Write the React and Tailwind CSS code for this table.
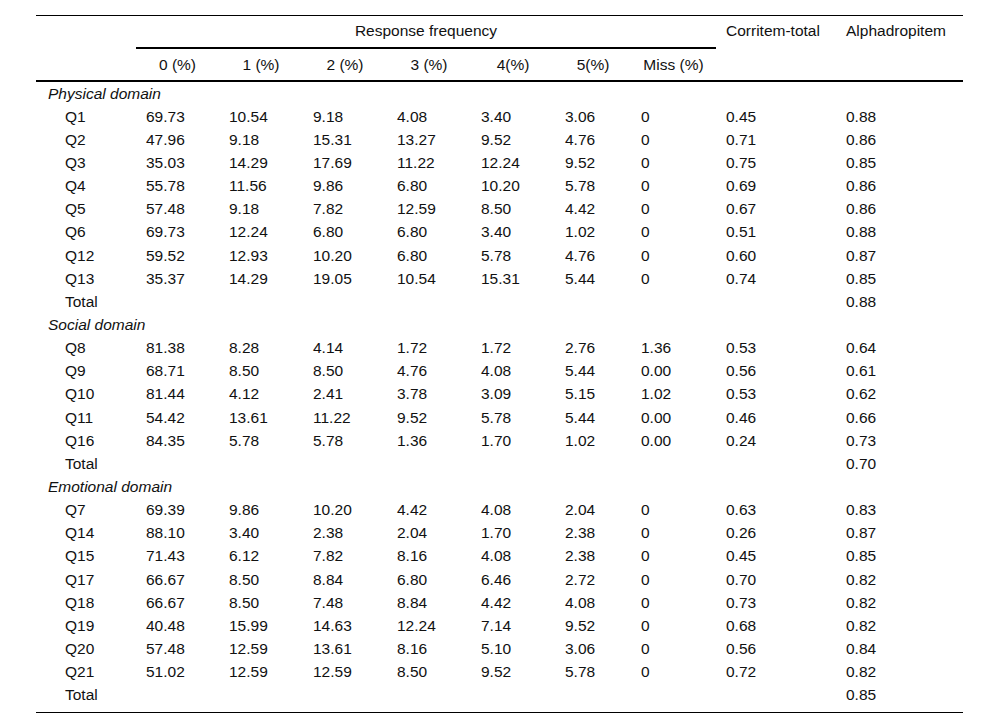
const cols = 'grid grid-cols-[100px_83px_84px_84px_84px_84px_76px_85px_120px_127px]'

const domains = [
  {
    name: 'Physical domain',
    rows: [
      ['Q1', '69.73', '10.54', '9.18', '4.08', '3.40', '3.06', '0', '0.45', '0.88'],
      ['Q2', '47.96', '9.18', '15.31', '13.27', '9.52', '4.76', '0', '0.71', '0.86'],
      ['Q3', '35.03', '14.29', '17.69', '11.22', '12.24', '9.52', '0', '0.75', '0.85'],
      ['Q4', '55.78', '11.56', '9.86', '6.80', '10.20', '5.78', '0', '0.69', '0.86'],
      ['Q5', '57.48', '9.18', '7.82', '12.59', '8.50', '4.42', '0', '0.67', '0.86'],
      ['Q6', '69.73', '12.24', '6.80', '6.80', '3.40', '1.02', '0', '0.51', '0.88'],
      ['Q12', '59.52', '12.93', '10.20', '6.80', '5.78', '4.76', '0', '0.60', '0.87'],
      ['Q13', '35.37', '14.29', '19.05', '10.54', '15.31', '5.44', '0', '0.74', '0.85'],
    ],
    total: '0.88',
  },
  {
    name: 'Social domain',
    rows: [
      ['Q8', '81.38', '8.28', '4.14', '1.72', '1.72', '2.76', '1.36', '0.53', '0.64'],
      ['Q9', '68.71', '8.50', '8.50', '4.76', '4.08', '5.44', '0.00', '0.56', '0.61'],
      ['Q10', '81.44', '4.12', '2.41', '3.78', '3.09', '5.15', '1.02', '0.53', '0.62'],
      ['Q11', '54.42', '13.61', '11.22', '9.52', '5.78', '5.44', '0.00', '0.46', '0.66'],
      ['Q16', '84.35', '5.78', '5.78', '1.36', '1.70', '1.02', '0.00', '0.24', '0.73'],
    ],
    total: '0.70',
  },
  {
    name: 'Emotional domain',
    rows: [
      ['Q7', '69.39', '9.86', '10.20', '4.42', '4.08', '2.04', '0', '0.63', '0.83'],
      ['Q14', '88.10', '3.40', '2.38', '2.04', '1.70', '2.38', '0', '0.26', '0.87'],
      ['Q15', '71.43', '6.12', '7.82', '8.16', '4.08', '2.38', '0', '0.45', '0.85'],
      ['Q17', '66.67', '8.50', '8.84', '6.80', '6.46', '2.72', '0', '0.70', '0.82'],
      ['Q18', '66.67', '8.50', '7.48', '8.84', '4.42', '4.08', '0', '0.73', '0.82'],
      ['Q19', '40.48', '15.99', '14.63', '12.24', '7.14', '9.52', '0', '0.68', '0.82'],
      ['Q20', '57.48', '12.59', '13.61', '8.16', '5.10', '3.06', '0', '0.56', '0.84'],
      ['Q21', '51.02', '12.59', '12.59', '8.50', '9.52', '5.78', '0', '0.72', '0.82'],
    ],
    total: '0.85',
  },
]

const freqHeads = ['0 (%)', '1 (%)', '2 (%)', '3 (%)', '4(%)', '5(%)', 'Miss (%)']

const Header = () => {
  return (
    <div className={`${cols} border-b-2 border-black`}>
      <div className="row-span-2"></div>
      <div className="col-span-7 h-[33px] pt-[6px] border-b-2 border-black text-center">
        Response frequency
      </div>
      <div className="row-span-2 pt-[6px] pl-[10px]">Corritem-total</div>
      <div className="row-span-2 pt-[6px] pl-[10px]">Alphadropitem</div>
      {freqHeads.map((h) => (
        <div key={h} className="h-[31px] pt-[7px] text-center">
          {h}
        </div>
      ))}
    </div>
  )
}

const Row = ({ cells }) => {
  return (
    <div className={`${cols} h-[23.15px] items-center`}>
      <div className="pl-[29px]">{cells[0]}</div>
      {cells.slice(1).map((c, i) => (
        <div key={i} className="pl-[10px]">
          {c}
        </div>
      ))}
    </div>
  )
}

export default function App() {
  return (
    <div className="bg-white min-h-[728px] pt-[15px] pl-[36px] text-[#111] text-[15.5px] leading-[18px] font-['Liberation_Sans',Arial,sans-serif]">
      <div className="w-[927px] border-t border-black">
        <Header />
        <div className="pb-[5px] border-b border-black">
          {domains.map((d) => (
            <div key={d.name}>
              <div className="h-[23.15px] flex items-center pl-[12px] italic">{d.name}</div>
              {d.rows.map((r) => (
                <Row key={r[0]} cells={r} />
              ))}
              <Row cells={['Total', '', '', '', '', '', '', '', '', d.total]} />
            </div>
          ))}
        </div>
      </div>
    </div>
  )
}
